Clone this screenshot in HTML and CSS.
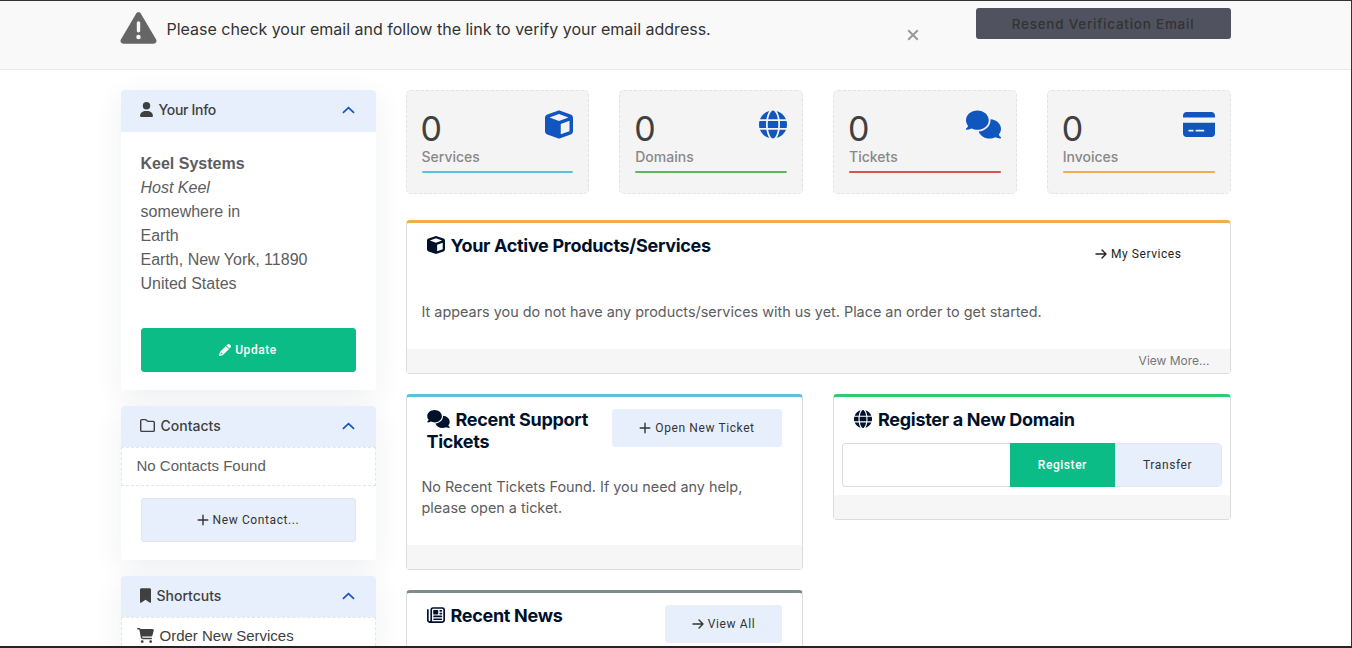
FILE: index.html
```html
<!DOCTYPE html>
<html lang="en">
<head>
    <meta charset="UTF-8">
    <meta name="viewport" content="width=device-width,initial-scale=1.0">
    <title>Client Area</title>
    <link rel="stylesheet" href="styles.css">
</head>
<body>
<svg class="sprite">
    <symbol id="warning" viewBox="0 0 512 512"><path d="M256 32c14.2 0 27.3 7.5 34.5 19.8l216 368c7.3 12.4 7.3 27.7 .2 40.1S486.3 480 472 480H40c-14.3 0-27.6-7.7-34.7-20.1s-7-27.8 .2-40.1l216-368C228.7 39.5 241.8 32 256 32zm0 128c-13.3 0-24 10.7-24 24V296c0 13.3 10.7 24 24 24s24-10.7 24-24V184c0-13.3-10.7-24-24-24zm32 224a32 32 0 1 0 -64 0 32 32 0 1 0 64 0z"/></symbol>
    <symbol id="user" viewBox="0 0 448 512"><path d="M224 256A128 128 0 1 0 224 0a128 128 0 1 0 0 256zm-45.7 48C79.8 304 0 383.8 0 482.3C0 498.7 13.3 512 29.7 512H418.3c16.4 0 29.7-13.3 29.7-29.7C448 383.8 368.2 304 269.7 304H178.3z"/></symbol>
    <symbol id="folder" viewBox="0 0 512 512"><path fill="none" stroke="currentColor" stroke-width="48" d="M64 56H181c10 0 20 4 27 11l30 30c12 12 28 19 45 19H448c22 0 40 18 40 40V416c0 22-18 40-40 40H64c-22 0-40-18-40-40V96c0-22 18-40 40-40z"/></symbol>
    <symbol id="bookmark" viewBox="0 0 384 512"><path d="M0 48V487.7C0 501.1 10.9 512 24.3 512c5 0 9.9-1.5 14-4.4L192 400 345.7 507.6c4.1 2.9 9 4.4 14 4.4c13.4 0 24.3-10.9 24.3-24.3V48c0-26.5-21.5-48-48-48H48C21.5 0 0 21.5 0 48z"/></symbol>
    <symbol id="cart" viewBox="0 0 576 512"><path d="M0 24C0 10.7 10.7 0 24 0H69.5c22 0 41.5 12.8 50.6 32h411c26.3 0 45.5 25 38.6 50.4l-41 152.3c-8.5 31.4-37 53.3-69.5 53.3H170.7l5.4 28.5c2.2 11.3 12.1 19.5 23.6 19.5H488c13.3 0 24 10.7 24 24s-10.7 24-24 24H199.7c-34.6 0-64.3-24.6-70.7-58.5L77.4 54.5c-.7-3.8-4-6.5-7.9-6.5H24C10.7 48 0 37.3 0 24zM128 464a48 48 0 1 1 96 0 48 48 0 1 1 -96 0zm336-48a48 48 0 1 1 0 96 48 48 0 1 1 0-96z"/></symbol>
    <symbol id="pencil" viewBox="0 0 512 512"><path d="M410.3 231l11.3-11.3-33.9-33.9-62.1-62.1L291.7 89.8l-11.3 11.3-22.6 22.6L58.6 322.9c-10.4 10.4-18 23.3-22.2 37.4L1 480.7c-2.5 8.4-.2 17.5 6.1 23.7s15.3 8.5 23.7 6.1l120.3-35.4c14.1-4.2 27-11.8 37.4-22.2L387.7 253.7 410.3 231zM160 399.4l-9.1 22.7c-4 3.1-8.5 5.4-13.3 6.9L59.4 452l23-78.1c1.4-4.9 3.8-9.4 6.9-13.3l22.7-9.1v32c0 8.8 7.2 16 16 16h32zM362.7 18.7L348.3 33.2 325.7 55.8 314.3 67.1l33.9 33.9 62.1 62.1 33.9 33.9 11.3-11.3 22.6-22.6 14.5-14.5c25-25 25-65.5 0-90.5L453.3 18.7c-25-25-65.5-25-90.5 0z"/></symbol>
    <symbol id="cube" viewBox="0 0 512 512"><path d="M234.5 5.7c13.9-5 29.1-5 43.1 0l192 68.6C495 83.4 512 107.5 512 134.6V377.4c0 27-17 51.2-42.5 60.3l-192 68.6c-13.9 5-29.1 5-43.1 0l-192-68.6C17 428.6 0 404.5 0 377.4V134.6c0-27 17-51.2 42.5-60.3l192-68.6zM256 66L82.3 128 256 190l173.7-62L256 66zm32 368.6l160-57.1v-188L288 246.6v188z"/></symbol>
    <symbol id="globe" viewBox="0 0 512 512"><path d="M352 256c0 22.2-1.2 43.6-3.3 64H163.3c-2.2-20.4-3.3-41.8-3.3-64s1.2-43.6 3.3-64H348.7c2.2 20.4 3.3 41.8 3.3 64zm28.8-64H503.9c5.3 20.5 8.1 41.9 8.1 64s-2.8 43.5-8.1 64H380.8c2.1-20.6 3.2-42 3.2-64s-1.1-43.4-3.2-64zm112.6-32H376.7c-10-63.9-29.8-117.4-55.3-151.6c78.3 20.7 142 77.5 171.9 151.6zm-149.1 0H167.7c6.1-36.4 15.5-68.6 27-94.7c10.5-23.6 22.2-40.7 33.5-51.5C239.4 3.2 248.7 0 256 0s16.6 3.2 27.8 13.8c11.3 10.8 23 27.9 33.5 51.5c11.6 26 20.9 58.2 27 94.7zm-209 0H18.6C48.6 85.9 112.2 29.1 190.6 8.4C165.1 42.6 145.3 96.1 135.3 160zM8.1 192H131.2c-2.1 20.6-3.2 42-3.2 64s1.1 43.4 3.2 64H8.1C2.8 299.5 0 278.1 0 256s2.8-43.5 8.1-64zM194.7 446.6c-11.6-26-20.9-58.2-27-94.6H344.3c-6.1 36.4-15.5 68.6-27 94.6c-10.5 23.6-22.2 40.7-33.5 51.5C272.6 508.8 263.3 512 256 512s-16.6-3.2-27.8-13.8c-11.3-10.8-23-27.9-33.5-51.5zM135.3 352c10 63.9 29.8 117.4 55.3 151.6C112.2 482.9 48.6 426.1 18.6 352H135.3zm358.1 0c-30 74.1-93.6 130.9-171.9 151.6c25.5-34.2 45.2-87.7 55.3-151.6H493.4z"/></symbol>
    <symbol id="comments" viewBox="0 0 640 512"><path d="M208 352c114.9 0 208-78.8 208-176S322.9 0 208 0S0 78.8 0 176c0 38.6 14.7 74.3 39.6 103.4c-3.5 9.4-8.7 17.7-14.2 24.7c-4.8 6.2-9.7 11-13.3 14.3c-1.8 1.6-3.3 2.9-4.3 3.7c-.5 .4-.9 .7-1.1 .8l-.2 .2C1 327.2-1.4 334.4 .8 340.9S9.1 352 16 352c21.8 0 43.8-5.6 62.1-12.5c9.2-3.5 17.8-7.4 25.2-11.4C134.1 343.3 169.8 352 208 352zM448 176c0 112.3-99.1 196.9-216.5 207C255.8 457.4 336.4 512 432 512c38.2 0 73.9-8.7 104.7-23.9c7.5 4 16 7.9 25.2 11.4c18.3 6.9 40.3 12.5 62.1 12.5c6.9 0 13.1-4.5 15.2-11.1c2.1-6.6-.2-13.8-5.8-17.9l-.2-.2c-.2-.2-.6-.4-1.1-.8c-1-.8-2.5-2-4.3-3.7c-3.6-3.3-8.5-8.1-13.3-14.3c-5.5-7-10.7-15.4-14.2-24.7c24.9-29 39.6-64.7 39.6-103.4c0-92.8-84.9-168.9-192.6-175.5c.4 5.1 .6 10.3 .6 15.5z"/></symbol>
    <symbol id="card" viewBox="0 0 576 512"><path d="M64 32C28.7 32 0 60.7 0 96v32H576V96c0-35.3-28.7-64-64-64H64zM576 224H0V416c0 35.3 28.7 64 64 64H512c35.3 0 64-28.7 64-64V224zM112 352h64c8.8 0 16 7.2 16 16s-7.2 16-16 16H112c-8.8 0-16-7.2-16-16s7.2-16 16-16zm112 16c0-8.8 7.2-16 16-16H368c8.8 0 16 7.2 16 16s-7.2 16-16 16H240c-8.8 0-16-7.2-16-16z"/></symbol>
    <symbol id="news" viewBox="0 0 512 512"><path d="M168 80c-13.3 0-24 10.7-24 24V408c0 8.4-1.4 16.5-4.1 24H440c13.3 0 24-10.7 24-24V104c0-13.3-10.7-24-24-24H168zM72 480c-39.8 0-72-32.2-72-72V112C0 98.7 10.7 88 24 88s24 10.7 24 24V408c0 13.3 10.7 24 24 24s24-10.7 24-24V104c0-39.8 32.2-72 72-72H440c39.8 0 72 32.2 72 72V408c0 39.8-32.2 72-72 72H72z"/><rect x="176" y="112" width="144" height="128" rx="24"/><path fill="none" stroke="currentColor" stroke-width="48" stroke-linecap="round" d="M376 136h32M376 216h32M200 296h208M200 376h208"/></symbol>
    <symbol id="plus" viewBox="0 0 12 12"><path fill="none" stroke="currentColor" stroke-width="1.4" stroke-linecap="round" d="M6 1.2v9.6M1.2 6h9.6"/></symbol>
    <symbol id="arrow" viewBox="0 0 12 12"><path fill="none" stroke="currentColor" stroke-width="1.4" stroke-linecap="round" stroke-linejoin="round" d="M1 6h10M7 2l4 4-4 4"/></symbol>
    <symbol id="up" viewBox="0 0 14 8"><path fill="none" stroke="currentColor" stroke-width="1.8" d="M1 7l6-5.6L13 7"/></symbol>
    <symbol id="close" viewBox="0 0 12 12"><path fill="none" stroke="currentColor" stroke-width="2" d="M1.2 1.2l9.6 9.6M10.8 1.2l-9.6 9.6"/></symbol>
</svg>

<div class="page">
    <div class="verify">
        <div class="container">
            <svg class="verify-icon"><use href="#warning"/></svg>
            <span class="verify-text">Please check your email and follow the link to verify your email address.</span>
            <svg class="verify-close"><use href="#close"/></svg>
            <button class="verify-btn">Resend Verification Email</button>
        </div>
    </div>

    <div class="container content">
        <aside class="sidebar">
            <div class="panel">
                <div class="panel-head">
                    <svg class="i-user"><use href="#user"/></svg>
                    <span class="t-info">Your Info</span>
                    <svg class="i-up"><use href="#up"/></svg>
                </div>
                <div class="address">
                    <strong>Keel Systems</strong><br>
                    <em>Host Keel</em><br>
                    somewhere in<br>
                    Earth<br>
                    Earth, New York, 11890<br>
                    United States
                </div>
                <div class="panel-foot">
                    <button class="btn btn-green"><svg class="i-btn"><use href="#pencil"/></svg>Update</button>
                </div>
            </div>
            <div class="panel">
                <div class="panel-head">
                    <svg class="i-folder"><use href="#folder"/></svg>
                    <span>Contacts</span>
                    <svg class="i-up"><use href="#up"/></svg>
                </div>
                <div class="item">No Contacts Found</div>
                <div class="panel-foot">
                    <button class="btn btn-blue"><svg class="i-btn"><use href="#plus"/></svg>New Contact...</button>
                </div>
            </div>
            <div class="panel">
                <div class="panel-head">
                    <svg class="i-bookmark"><use href="#bookmark"/></svg>
                    <span>Shortcuts</span>
                    <svg class="i-up"><use href="#up"/></svg>
                </div>
                <div class="item item-link"><svg class="i-cart"><use href="#cart"/></svg>Order New Services</div>
            </div>
        </aside>

        <main class="main">
            <div class="tiles">
                <div class="tile">
                    <div class="tile-text"><div class="stat">0</div><div class="title">Services</div></div>
                    <svg class="tile-icon"><use href="#cube"/></svg>
                    <div class="line aqua"></div>
                </div>
                <div class="tile">
                    <div class="tile-text"><div class="stat">0</div><div class="title">Domains</div></div>
                    <svg class="tile-icon"><use href="#globe"/></svg>
                    <div class="line green"></div>
                </div>
                <div class="tile">
                    <div class="tile-text"><div class="stat">0</div><div class="title">Tickets</div></div>
                    <svg class="tile-icon wide"><use href="#comments"/></svg>
                    <div class="line red"></div>
                </div>
                <div class="tile">
                    <div class="tile-text"><div class="stat">0</div><div class="title">Invoices</div></div>
                    <svg class="tile-icon mid"><use href="#card"/></svg>
                    <div class="line gold"></div>
                </div>
            </div>

            <section class="card card-services">
                <div class="card-head">
                    <h3><svg class="i-h"><use href="#cube"/></svg>Your Active Products/Services</h3>
                    <a class="btn-plain"><svg class="i-btn"><use href="#arrow"/></svg>My Services</a>
                </div>
                <p>It appears you do not have any products/services with us yet. Place an order to get started.</p>
                <div class="card-foot">View More...</div>
            </section>

            <div class="columns">
                <div class="column">
                    <section class="card card-tickets">
                        <div class="card-head">
                            <h3><svg class="i-h i-comments"><use href="#comments"/></svg>Recent Support Tickets</h3>
                            <button class="btn btn-sm w-ticket"><svg class="i-btn"><use href="#plus"/></svg>Open New Ticket</button>
                        </div>
                        <p>No Recent Tickets Found. If you need any help, please open a ticket.</p>
                        <div class="card-foot"></div>
                    </section>
                    <section class="card card-news">
                        <div class="card-head">
                            <h3><svg class="i-h"><use href="#news"/></svg>Recent News</h3>
                            <button class="btn btn-sm w-view"><svg class="i-btn"><use href="#arrow"/></svg>View All</button>
                        </div>
                    </section>
                </div>
                <div class="column">
                    <section class="card card-domain">
                        <div class="card-head">
                            <h3><svg class="i-h"><use href="#globe"/></svg>Register a New Domain</h3>
                        </div>
                        <div class="domain-form">
                            <input type="text">
                            <button class="btn btn-green">Register</button>
                            <button class="btn btn-blue">Transfer</button>
                        </div>
                        <div class="card-foot"></div>
                    </section>
                </div>
            </div>
        </main>
    </div>
</div>
</body>
</html>
```
FILE: styles.css
```css
* {
    box-sizing: border-box;
}

body {
    margin: 0;
    font-family: Inter, "Liberation Sans", sans-serif;
    font-size: 15px;
    color: #5c5d5f;
    background: #fff;
}

svg {
    fill: currentColor;
    flex: none;
}

.sprite {
    display: none;
}

/* window frame */
.page {
    height: 648px;
    overflow: hidden;
    border-top: 1px solid #333;
    border-right: 1px solid #333;
    border-bottom: 2px solid #252324;
}

.container {
    width: 1110px;
    margin: 0 auto;
}

/* email verification bar */
.verify {
    height: 69px;
    background: #f9f9f9;
    border-bottom: 1px solid #ebebeb;
}

.verify .container {
    display: flex;
    align-items: flex-start;
}

.verify-icon {
    width: 37px;
    height: 36px;
    margin: 9px 10px 0 -1px;
    color: #666;
}

.verify-text {
    width: 740px;
    margin-top: 17px;
    font-size: 16px;
    line-height: 22px;
    color: #333;
}

.verify-close {
    width: 12px;
    height: 12px;
    margin-top: 28px;
    color: #999;
}

.verify-btn {
    width: 255px;
    height: 31px;
    margin: 7px 0 0 auto;
    padding: 1px 0 0;
    border: 0;
    border-radius: 3px;
    background: #50525f;
    color: #333;
    font: 500 13.5px/30px Inter, sans-serif;
    letter-spacing: .75px;
}

.content {
    display: flex;
    gap: 30px;
    padding-top: 20px;
}

.sidebar {
    width: 255px;
    flex: none;
}

.panel {
    margin-bottom: 16px;
    border-radius: 4px;
    background: #fff;
    box-shadow: 0 8px 30px rgba(20, 40, 60, .07);
}

.panel-head {
    display: flex;
    align-items: center;
    height: 41px;
    padding: 0 21px 2px 19px;
    border-radius: 4px 4px 0 0;
    background: #e7effd;
    color: #404040;
    font-size: 14px;
    font-weight: 500;
}

.panel:first-child .panel-head {
    height: 42px;
    padding-bottom: 3px;
}

.t-info {
    letter-spacing: -.3px;
}

.i-user {
    width: 13px;
    height: 15px;
    margin-right: 6px;
}

.i-folder {
    width: 15px;
    height: 15px;
    margin-right: 6px;
}

.i-bookmark {
    width: 11px;
    height: 15px;
    margin-right: 6px;
}

.i-up {
    width: 13px;
    height: 8px;
    margin-left: auto;
    color: #1155c4;
}

.address {
    height: 196px;
    padding: 20px 20px 0;
    font: 16px/24px "Liberation Sans", Arial, sans-serif;
}

.item {
    height: 39px;
    padding-left: 15px;
    border: 1px dashed #e5e5e5;
    font: 15px/36px "Liberation Sans", Arial, sans-serif;
}

.item-link {
    display: flex;
    align-items: center;
    padding-bottom: 2px;
    color: #404040;
}

.i-cart {
    width: 17px;
    height: 15px;
    margin-right: 6px;
}

.panel-foot {
    padding: 0 20px 18px;
}

.item + .panel-foot {
    padding-top: 12px;
}

.btn {
    display: flex;
    align-items: center;
    justify-content: center;
    width: 100%;
    height: 44px;
    padding: 0 0 1px;
    border: 1px solid #dfe6f1;
    border-radius: 3px;
    background: #e7effd;
    color: #333;
    font: 12px Roboto, sans-serif;
    letter-spacing: .6px;
}

.btn-green {
    border-color: #0cbc87;
    background: #0cbc87;
    color: #fff;
    font-weight: 500;
    letter-spacing: .55px;
}

.i-btn {
    width: 12px;
    height: 12px;
    margin-right: 4px;
}

.main {
    width: 825px;
}

.tiles {
    display: grid;
    grid-template-columns: repeat(4, 1fr);
    gap: 30px;
    margin-bottom: 26px;
}

.tile {
    display: flex;
    flex-wrap: wrap;
    justify-content: space-between;
    align-items: flex-start;
    align-content: flex-start;
    height: 104px;
    padding: 18px 15px 0;
    border: 1px dashed #e3e3e3;
    border-radius: 5px;
    background: #f4f4f4;
}

.stat {
    height: 38px;
    margin-left: -1px;
    font-size: 34px;
    line-height: 40px;
    color: #404040;
}

.title {
    height: 24px;
    font-size: 14px;
    line-height: 20px;
    font-weight: 500;
    color: #888;
}

.tile-icon {
    width: 28px;
    height: 29px;
    margin-top: 1px;
    color: #1155bf;
}

.tile-icon.wide {
    width: 35px;
}

.tile-icon.mid {
    width: 32px;
}

.line {
    width: 100%;
    height: 2px;
    border-radius: 1px;
}

.aqua {
    background: #5bc0de;
}

.green {
    background: #5cb85c;
}

.red {
    background: #d9534f;
}

.gold {
    background: #f0ad4e;
}

.card {
    display: flex;
    flex-direction: column;
    margin-bottom: 20px;
    border: 1px solid #dcdcdc;
    border-top: 3px solid #f0ad4e;
    border-radius: 4px;
}

.card-services {
    height: 154px;
}

.card-tickets {
    height: 176px;
    border-top-color: #5bc0de;
}

.card-news {
    height: 176px;
    border-top-color: #7f8c8d;
}

.card-domain {
    height: 126px;
    border-top-color: #2ecc71;
}

.card-head {
    display: flex;
    justify-content: space-between;
    padding: 12px 20px 0;
}

.card h3 {
    margin: 0;
    font-size: 18px;
    line-height: 22px;
    font-weight: 700;
    letter-spacing: -.3px;
    color: #00112c;
}

.i-h {
    width: 18px;
    height: 18px;
    margin-right: 6px;
    vertical-align: -2px;
}

.i-comments {
    width: 23px;
}

.btn-plain {
    display: flex;
    align-items: center;
    height: 38px;
    padding: 0 28px 1px 0;
    color: #222;
    font: 12px Roboto, sans-serif;
    letter-spacing: .55px;
}

.btn-sm {
    height: 38px;
    border-color: #e7effd;
    flex: none;
}

.w-ticket {
    width: 170px;
}

.w-view {
    width: 117px;
}

.card p {
    margin: 0;
    padding: 28px 15px 0;
    font-size: 14.4px;
    line-height: 21px;
}

.card-tickets p {
    padding-top: 23px;
}

.card-foot {
    height: 24px;
    margin-top: auto;
    padding-right: 20px;
    background: #f6f6f6;
    color: #777;
    font-size: 12px;
    line-height: 23px;
    text-align: right;
}

.columns {
    display: grid;
    grid-template-columns: 1fr 1fr;
    gap: 30px;
}

.column {
    min-width: 0;
}

.domain-form {
    display: flex;
    padding: 12px 8px 0;
}

.domain-form input {
    width: 168px;
    height: 44px;
    border: 1px solid #dcdcdc;
    border-right: 0;
    border-radius: 4px 0 0 4px;
}

.domain-form .btn-green {
    width: 105px;
    border-radius: 0;
}

.domain-form .btn-blue {
    width: 107px;
    border-left: 0;
    border-radius: 0 5px 5px 0;
}
```
